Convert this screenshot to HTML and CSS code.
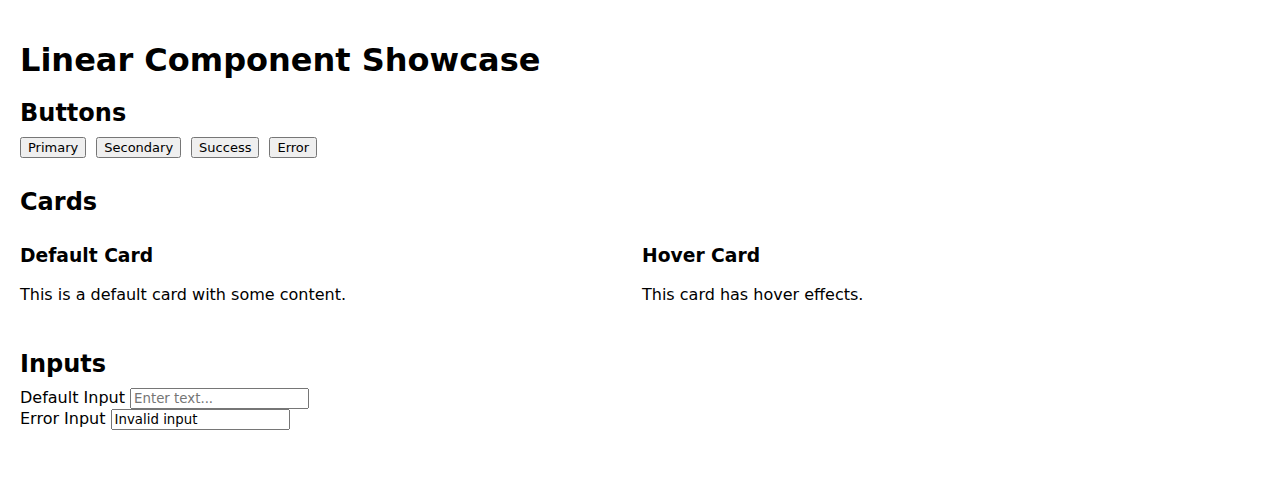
FILE: index.html
```html
<!DOCTYPE html>
<html>
<head>
<meta charset="utf-8">
<title>Linear Component Showcase</title>
<link rel="stylesheet" href="styles.css">
</head>
<body>
<div class="page">
  <h1>Linear Component Showcase</h1>
  <section class="section">
    <h2>Buttons</h2>
    <div class="buttons">
      <button class="btn">Primary</button>
      <button class="btn">Secondary</button>
      <button class="btn">Success</button>
      <button class="btn">Error</button>
    </div>
  </section>
  <section class="section">
    <h2>Cards</h2>
    <div class="cards">
      <div class="card">
        <h3>Default Card</h3>
        <p>This is a default card with some content.</p>
      </div>
      <div class="card">
        <h3>Hover Card</h3>
        <p>This card has hover effects.</p>
      </div>
    </div>
  </section>
  <section class="section">
    <h2>Inputs</h2>
    <div class="field"><label>Default Input</label> <input class="input" type="text" placeholder="Enter text..."></div>
    <div class="field"><label>Error Input</label> <input class="input" type="text" value="Invalid input"></div>
  </section>
</div>
</body>
</html>
```
FILE: styles.css
```css
body {
  margin: 0;
  font-family: "DejaVu Sans", sans-serif;
}
.page {
  padding: 20px;
}
h1 {
  font-size: 32px;
  margin: 0.67em 0 20px;
}
.section {
  margin-bottom: 30px;
}
.section h2 {
  font-size: 24px;
  margin: 0 0 10px;
}
.buttons {
  display: flex;
  gap: 10px;
}
.btn {
  font-family: "DejaVu Sans", sans-serif;
  font-size: 13px;
}
.cards {
  display: grid;
  grid-template-columns: 1fr 1fr;
  gap: 20px;
}
.input {
  font-family: "DejaVu Sans", sans-serif;
  font-size: 13.33px;
}
```
